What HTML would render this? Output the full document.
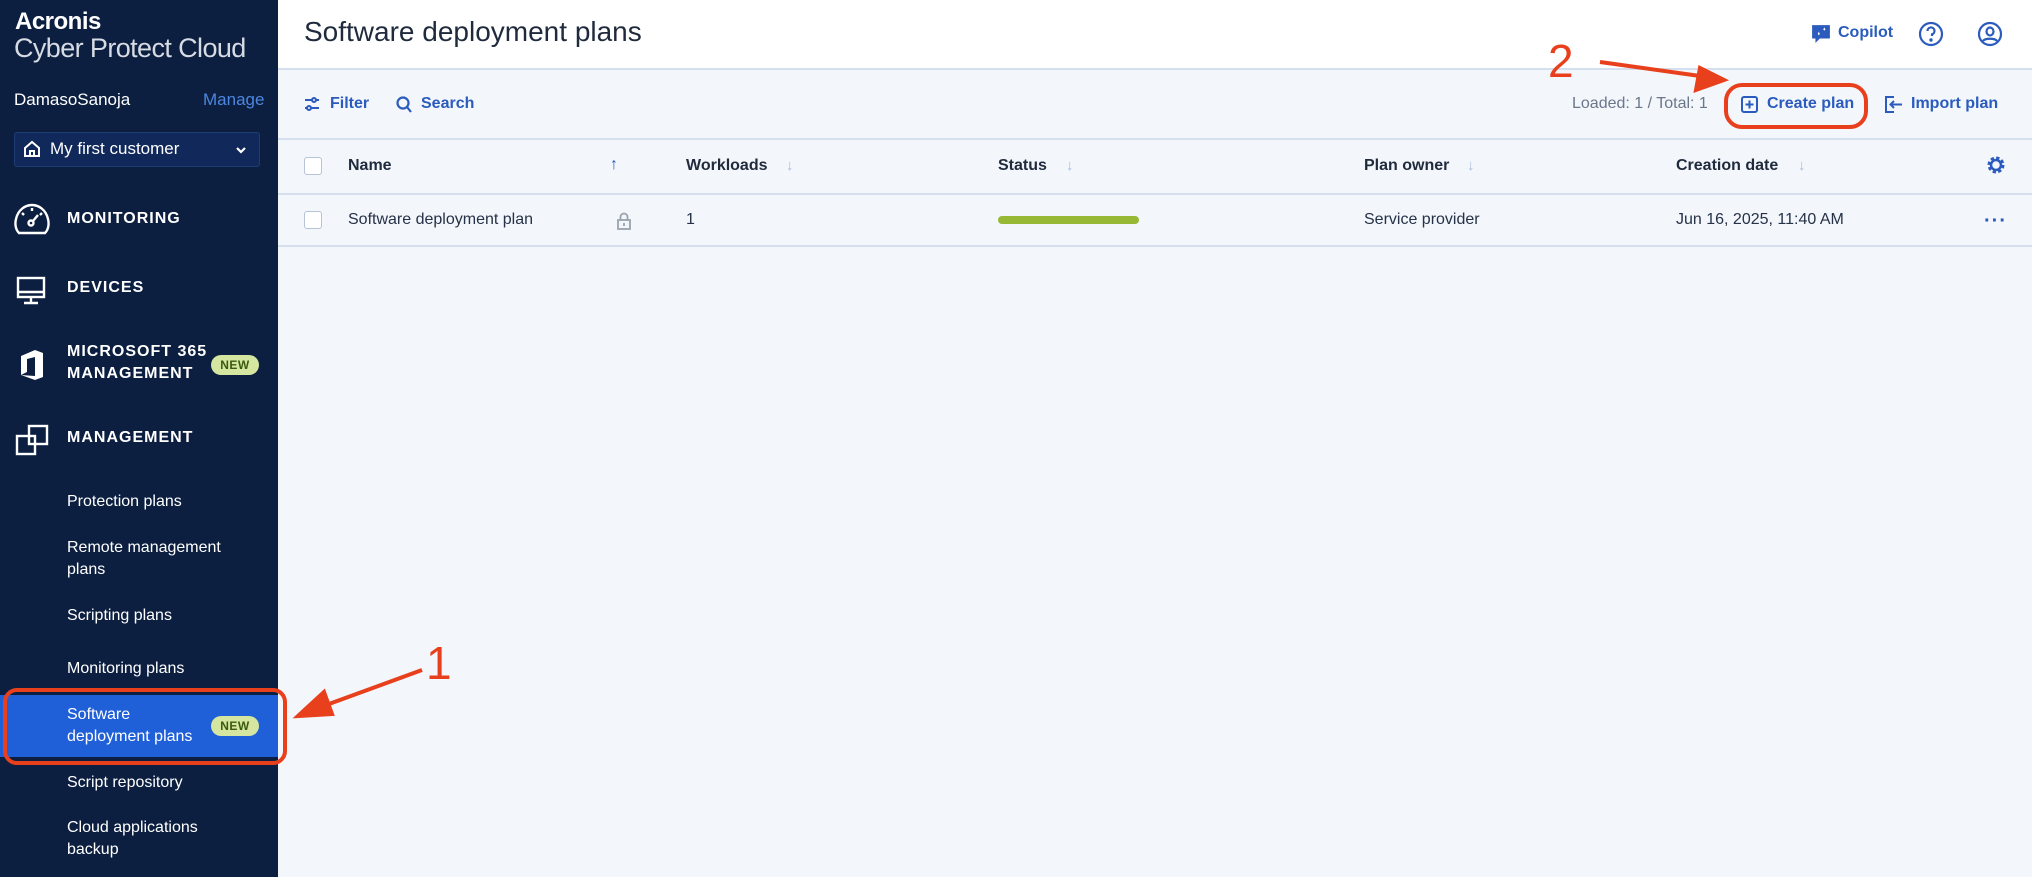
<!DOCTYPE html>
<html><head><meta charset="utf-8"><style>
*{margin:0;padding:0;box-sizing:border-box}
body{width:2032px;height:877px;overflow:hidden;font-family:"Liberation Sans",sans-serif;background:#f3f6fb;position:relative}
.a{position:absolute;white-space:nowrap}
#sb{position:absolute;left:0;top:0;width:278px;height:877px;background:#0c1f40}
.w{color:#fff}
.nav{font-weight:bold;font-size:16px;letter-spacing:1px;color:#fff}
.sub{font-size:16px;color:#fff;line-height:22px}
.badge{background:#d4e6a0;color:#3b5a10;font-weight:bold;font-size:12px;border-radius:10px;width:48px;height:20px;text-align:center;line-height:20px;letter-spacing:.5px}
.bl{color:#2a5bbd;font-size:16px}
.th{font-weight:bold;font-size:16px;color:#1f2a3c}
.td{font-size:16px;color:#253247}
.ar{color:#a9bde0;font-size:15px}
.cb{width:18px;height:18px;border:1px solid #b7c3d6;border-radius:3px;background:#fff}
.hl{position:absolute;left:278px;width:1754px;height:2px;background:#d6dfee}
</style></head><body>
<div id="sb"></div>
<div class="a w" style="left:15px;top:8px;font-size:24px;font-weight:bold;letter-spacing:-.5px">Acronis</div>
<div class="a" style="left:14px;top:33px;font-size:27px;color:#d6dbe4;letter-spacing:-.6px">Cyber Protect Cloud</div>
<div class="a w" style="left:14px;top:90px;font-size:17px">DamasoSanoja</div>
<div class="a" style="left:203px;top:90px;font-size:17px;color:#4c86e0">Manage</div>
<div class="a" style="left:14px;top:132px;width:246px;height:35px;background:#10285a;border:1px solid #1e3d73;border-radius:3px"></div>
<svg class="a" style="left:23px;top:140px" width="18" height="18" viewBox="0 0 18 18" fill="none" stroke="#fff" stroke-width="2"><path d="M2 8 9 2l7 6v8H2z"/><rect x="7" y="11" width="4" height="5"/></svg>
<div class="a w" style="left:50px;top:139px;font-size:17px">My first customer</div>
<svg class="a" style="left:235px;top:146px" width="12" height="8" viewBox="0 0 12 8" fill="none" stroke="#fff" stroke-width="2.2"><path d="M2 2l4 4 4-4"/></svg>

<svg class="a" style="left:14px;top:203px" width="36" height="32" viewBox="0 0 36 32" fill="none" stroke="#fff" stroke-width="2.4"><path d="M5 30 C1 26 1 20 2 16 C4 7 11 2 18 2 C25 2 32 7 34 16 C35 20 35 26 31 30Z"/><circle cx="17" cy="20" r="2.5"/><path d="M19 18l5-6M18 5v3M8 10l2 2M28 10l-2 2"/></svg>
<div class="a nav" style="left:67px;top:210px">MONITORING</div>
<svg class="a" style="left:16px;top:276px" width="30" height="30" viewBox="0 0 30 30" fill="none" stroke="#fff" stroke-width="2.4"><rect x="2" y="2" width="26" height="19"/><path d="M2 16h26M15 21v5M8 27h14"/></svg>
<div class="a nav" style="left:67px;top:279px">DEVICES</div>
<svg class="a" style="left:19px;top:348px" width="26" height="34" viewBox="0 0 26 34" fill="#fff"><path d="M2 8 16 2l8 3v24l-8 3-14-5 14 1V9L8 11v13l-6 3z"/></svg>
<div class="a nav" style="left:67px;top:343px">MICROSOFT 365</div>
<div class="a nav" style="left:67px;top:365px">MANAGEMENT</div>
<div class="a badge" style="left:211px;top:355px">NEW</div>
<svg class="a" style="left:15px;top:424px" width="34" height="32" viewBox="0 0 34 32" fill="none" stroke="#fff" stroke-width="2.4"><rect x="2" y="12" width="18" height="18"/><rect x="14" y="2" width="18" height="18"/></svg>
<div class="a nav" style="left:67px;top:429px">MANAGEMENT</div>

<div class="a sub" style="left:67px;top:491px">Protection plans</div>
<div class="a sub" style="left:67px;top:537px">Remote management<br>plans</div>
<div class="a sub" style="left:67px;top:605px">Scripting plans</div>
<div class="a sub" style="left:67px;top:658px">Monitoring plans</div>
<div class="a" style="left:0;top:695px;width:278px;height:62px;background:#1f5fd8"></div>
<div class="a sub" style="left:67px;top:704px">Software<br>deployment plans</div>
<div class="a badge" style="left:211px;top:716px">NEW</div>
<div class="a sub" style="left:67px;top:772px">Script repository</div>
<div class="a sub" style="left:67px;top:817px">Cloud applications<br>backup</div>

<div class="a" style="left:278px;top:0;width:1754px;height:69px;background:#fff"></div>
<div class="hl" style="top:68px"></div>
<div class="a" style="left:304px;top:16px;font-size:28px;color:#1f2a3c">Software deployment plans</div>
<svg class="a" style="left:1811px;top:24px" width="20" height="20" viewBox="0 0 18 18"><path d="M1 1h16v12H8l-4 4v-4H1z" fill="#2a5bbd"/><path d="M6 9l1-2 1 2-1 1zM11 5l1-2 1 2-1 1z" fill="#fff"/></svg>
<div class="a bl" style="left:1838px;top:24px;font-weight:bold">Copilot</div>
<svg class="a" style="left:1918px;top:21px" width="26" height="26" viewBox="0 0 26 26" fill="none" stroke="#2a5bbd" stroke-width="2.2"><circle cx="13" cy="13" r="11"/><path d="M9.5 10a3.5 3.5 0 1 1 4.5 3.3V15"/><circle cx="13" cy="19" r=".6" fill="#2a5bbd"/></svg>
<svg class="a" style="left:1977px;top:21px" width="26" height="26" viewBox="0 0 26 26" fill="none" stroke="#2a5bbd" stroke-width="2.2"><circle cx="13" cy="13" r="11"/><ellipse cx="13" cy="10.5" rx="3.5" ry="4"/><path d="M6 20c2-3 12-3 14 0"/></svg>

<svg class="a" style="left:304px;top:95px" width="16" height="18" viewBox="0 0 16 18" fill="none" stroke="#2a5bbd" stroke-width="2"><path d="M1 5h14M1 13h14"/><circle cx="10" cy="5" r="2" fill="#f3f6fb"/><circle cx="5" cy="13" r="2" fill="#f3f6fb"/></svg>
<div class="a bl" style="left:330px;top:95px;font-weight:bold">Filter</div>
<svg class="a" style="left:396px;top:96px" width="16" height="17" viewBox="0 0 16 17" fill="none" stroke="#2a5bbd" stroke-width="2.2"><circle cx="7" cy="7" r="5.5"/><path d="M11 11l4 5"/></svg>
<div class="a bl" style="left:421px;top:95px;font-weight:bold">Search</div>
<div class="a" style="left:1572px;top:95px;font-size:16px;color:#6b778a">Loaded: 1 / Total: 1</div>
<svg class="a" style="left:1741px;top:96px" width="17" height="17" viewBox="0 0 17 17" fill="none" stroke="#2a5bbd" stroke-width="2"><rect x="1" y="1" width="15" height="15" rx="2"/><path d="M8.5 4.5v8M4.5 8.5h8"/></svg>
<div class="a bl" style="left:1767px;top:95px;font-weight:bold">Create plan</div>
<svg class="a" style="left:1885px;top:96px" width="18" height="17" viewBox="0 0 18 17" fill="none" stroke="#2a5bbd" stroke-width="2"><path d="M9 1H1v15h8M17 8.5H6M9 5l-3.5 3.5L9 12"/></svg>
<div class="a bl" style="left:1911px;top:95px;font-weight:bold">Import plan</div>
<div class="hl" style="top:138px"></div>

<div class="a cb" style="left:304px;top:157px"></div>
<div class="a th" style="left:348px;top:157px">Name</div>
<div class="a" style="left:610px;top:156px;color:#2a5bbd;font-size:16px;font-weight:bold">↑</div>
<div class="a th" style="left:686px;top:157px">Workloads</div>
<div class="a ar" style="left:786px;top:157px">↓</div>
<div class="a th" style="left:998px;top:157px">Status</div>
<div class="a ar" style="left:1066px;top:157px">↓</div>
<div class="a th" style="left:1364px;top:157px">Plan owner</div>
<div class="a ar" style="left:1467px;top:157px">↓</div>
<div class="a th" style="left:1676px;top:157px">Creation date</div>
<div class="a ar" style="left:1798px;top:157px">↓</div>
<svg class="a" style="left:1987px;top:156px" width="18" height="18" viewBox="0 0 18 18"><circle cx="9" cy="9" r="6.5" fill="none" stroke="#2a5bbd" stroke-width="4" stroke-dasharray="3 2.1"/><circle cx="9" cy="9" r="5" fill="none" stroke="#2a5bbd" stroke-width="2.5"/></svg>
<div class="hl" style="top:193px"></div>

<div class="a cb" style="left:304px;top:211px"></div>
<div class="a td" style="left:348px;top:211px">Software deployment plan</div>
<svg class="a" style="left:617px;top:212px" width="14" height="18" viewBox="0 0 14 18" fill="none" stroke="#9aa3b0" stroke-width="1.8"><path d="M3.5 8V5a3.5 3.5 0 0 1 7 0v3"/><rect x="1" y="8" width="12" height="9"/><path d="M7 11v3"/></svg>
<div class="a td" style="left:686px;top:211px">1</div>
<div class="a" style="left:998px;top:216px;width:141px;height:8px;border-radius:4px;background:#97b835"></div>
<div class="a td" style="left:1364px;top:211px">Service provider</div>
<div class="a td" style="left:1676px;top:211px">Jun 16, 2025, 11:40 AM</div>
<div class="a" style="left:1984px;top:210px;color:#2a5bbd;font-size:20px;font-weight:bold;letter-spacing:1px">···</div>
<div class="hl" style="top:245px"></div>

<div class="a" style="left:3px;top:688px;width:284px;height:77px;border:4px solid #e8401c;border-radius:14px"></div>
<div class="a" style="left:1724px;top:83px;width:144px;height:46px;border:4px solid #e8401c;border-radius:18px"></div>
<svg class="a" style="left:0;top:0" width="2032" height="877"><g stroke="#e8401c" stroke-width="4" fill="#e8401c"><path d="M422 670 318 708"/><path d="M298 716l26-24 8 22z"/><path d="M1600 62 1700 76"/><path d="M1724 80l-28 10 4-22z"/></g></svg>
<div class="a" style="left:426px;top:636px;font-size:46px;color:#e8401c">1</div>
<div class="a" style="left:1548px;top:34px;font-size:46px;color:#e8401c">2</div>
</body></html>
